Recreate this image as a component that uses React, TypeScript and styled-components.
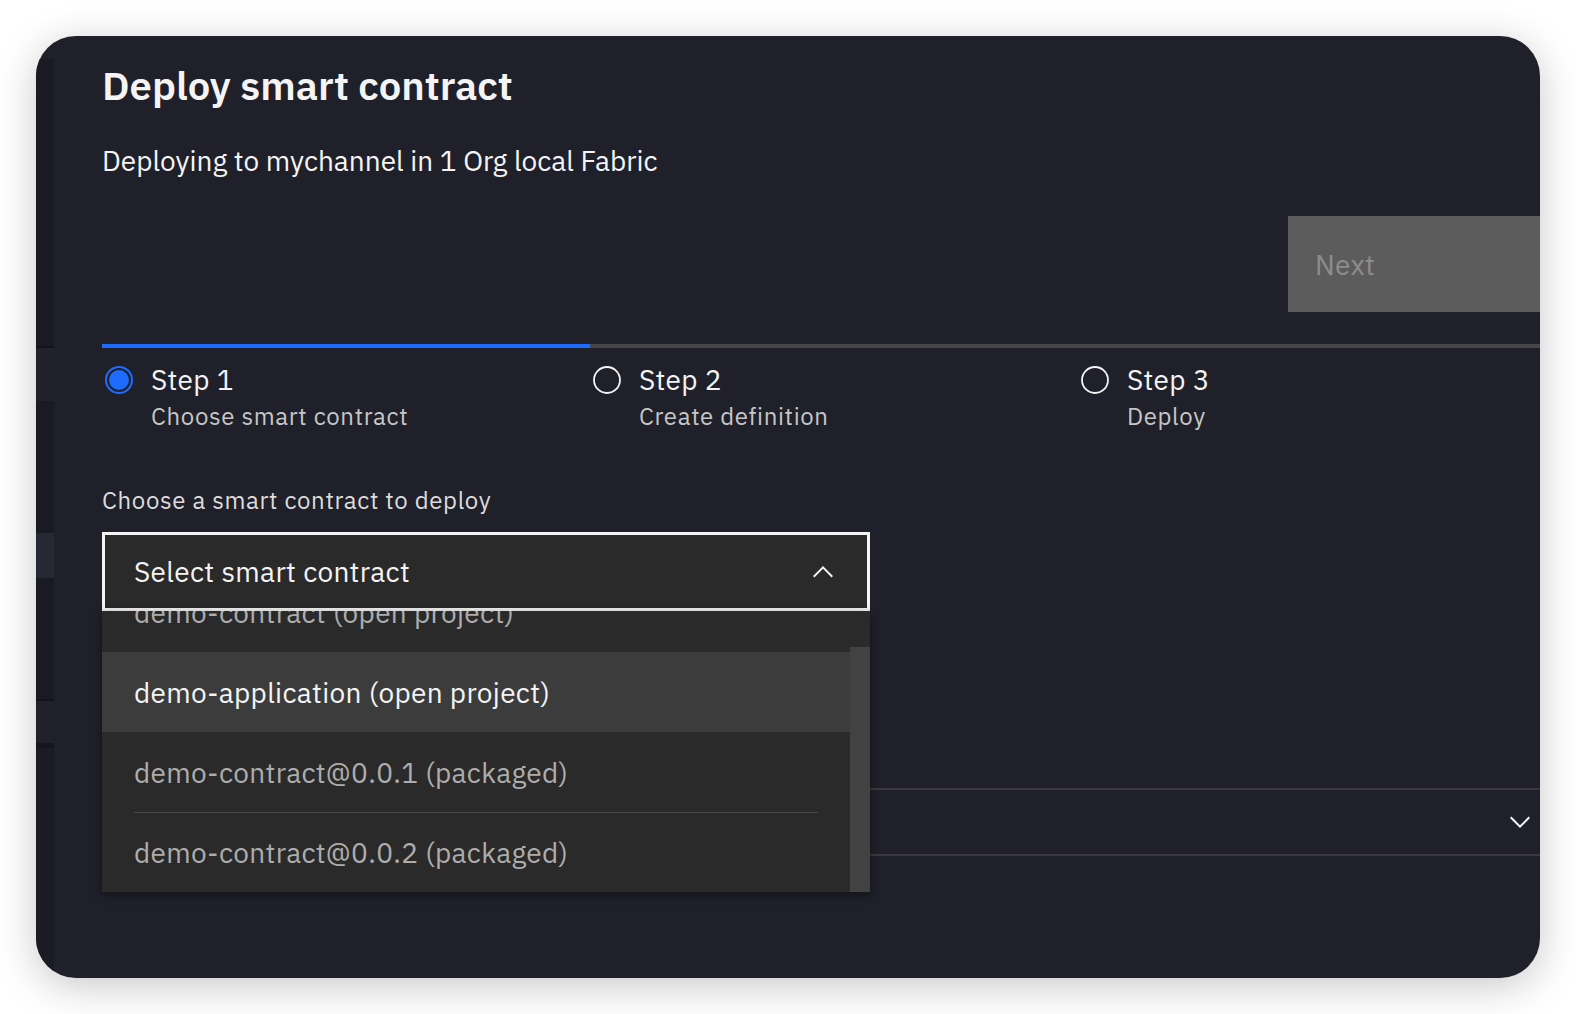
import React, { useLayoutEffect, useRef } from "react";
import styled, { createGlobalStyle } from "styled-components";

const GlobalStyle = createGlobalStyle`
  html, body {
    margin: 0;
    padding: 0;
    background: #ffffff;
  }
  * {
    box-sizing: border-box;
  }
`;

const Page = styled.div`
  width: 1576px;
  height: 1014px;
  padding: 36px;
  background: #ffffff;
  font-family: "IBM Plex Sans", Roboto, "Noto Sans", sans-serif;
`;

const Window = styled.div`
  display: flex;
  width: 1504px;
  height: 942px;
  border-radius: 40px;
  overflow: hidden;
  background: #1f2029;
  box-shadow: 0 8px 40px rgba(0, 0, 0, 0.22);
`;

const Sidebar = styled.div`
  display: flex;
  flex-direction: column;
  flex: 0 0 18px;
  padding-top: 23px;
`;

const SideBlock = styled.div<{ $h?: number; $bg: string; $line?: string }>`
  flex: ${(p) => (p.$h ? `0 0 ${p.$h}px` : "1 1 auto")};
  background: ${(p) => p.$bg};
  border-bottom: ${(p) => (p.$line ? `2px solid ${p.$line}` : "none")};
`;

const Main = styled.div`
  flex: 1 1 auto;
  min-width: 0;
  padding: 25px 0 0 48px;
  color: #f4f4f4;
`;

const Content = styled.div`
  display: flex;
  flex-direction: column;
  width: 1464px;
`;

const Title = styled.h1`
  margin: 0;
  font-size: 40px;
  line-height: 48px;
  font-weight: 600;
  color: #f4f4f4;
`;

const Subtitle = styled.p`
  margin: 34px 0 0;
  font-size: 28px;
  line-height: 36px;
  font-weight: 400;
  color: #f4f4f4;
`;

const Actions = styled.div`
  display: flex;
  justify-content: flex-end;
  margin-top: 37px;
`;

const NextButton = styled.button`
  width: 278px;
  height: 96px;
  padding: 0 27px;
  border: none;
  background: #5c5c5c;
  color: #8d8d8d;
  font-family: inherit;
  font-size: 28px;
  letter-spacing: 0.32px;
  text-align: left;
`;

const Steps = styled.div`
  display: grid;
  grid-template-columns: repeat(3, 488px);
  margin-top: 32px;
`;

const Step = styled.div<{ $current?: boolean }>`
  display: grid;
  grid-template-columns: 28px 1fr;
  column-gap: 18px;
  padding: 14px 0 0 3px;
  border-top: 4px solid ${(p) => (p.$current ? "#1d6cff" : "#474747")};
`;

const StepIcon = styled.svg`
  margin-top: 4px;
`;

const StepText = styled.div`
  display: flex;
  flex-direction: column;
`;

const StepLabel = styled.span`
  font-size: 28px;
  line-height: 36px;
  letter-spacing: 0.32px;
  color: #f4f4f4;
`;

const StepHint = styled.span`
  margin-top: 2px;
  font-size: 24px;
  line-height: 32px;
  letter-spacing: 0.64px;
  color: #c6c6c6;
`;

const FieldLabel = styled.label`
  margin-top: 52px;
  font-size: 24px;
  line-height: 32px;
  letter-spacing: 0.64px;
  color: #dcdcdc;
`;

const SelectWrap = styled.div`
  position: relative;
  width: 768px;
  margin-top: 16px;
  z-index: 2;
`;

const SelectBox = styled.div`
  display: flex;
  align-items: center;
  justify-content: space-between;
  height: 79px;
  padding: 0 28px 0 29px;
  border: 3px solid #f4f4f4;
  background: #2a2a2a;
  font-size: 28px;
  letter-spacing: 0.32px;
  color: #f4f4f4;
`;

const Menu = styled.div`
  position: absolute;
  top: 100%;
  left: 0;
  display: flex;
  width: 100%;
  height: 281px;
  background: #2a2a2a;
  box-shadow: 0 3px 10px rgba(0, 0, 0, 0.45);
`;

const OptionList = styled.div`
  flex: 1 1 auto;
  overflow: hidden;
`;

const ScrollTrack = styled.div`
  flex: 0 0 20px;
  display: flex;
  flex-direction: column;
  padding-top: 36px;
`;

const ScrollThumb = styled.div`
  flex: 1 1 auto;
  background: #424242;
`;

const Option = styled.div<{ $active?: boolean }>`
  height: 80px;
  padding: 0 32px;
  background: ${(p) => (p.$active ? "#3c3c3c" : "transparent")};
`;

const OptionLabel = styled.div<{ $active?: boolean; $divider?: boolean }>`
  display: flex;
  align-items: center;
  height: 100%;
  border-top: 1px solid ${(p) => (p.$divider ? "#4a4a4a" : "transparent")};
  font-size: 28px;
  letter-spacing: 0.32px;
  color: ${(p) => (p.$active ? "#f4f4f4" : "#adadad")};
  white-space: nowrap;
`;

const Accordion = styled.div`
  display: flex;
  align-items: center;
  justify-content: flex-end;
  height: 68px;
  margin-top: 177px;
  padding-right: 30px;
  border-top: 2px solid #3a3a3e;
  border-bottom: 2px solid #3a3a3e;
`;

const Chevron = ({ up }: { up?: boolean }) => (
  <svg width="32" height="32" viewBox="0 0 16 16" fill="#f4f4f4">
    {up ? (
      <path d="M8 5L13 10 12.3 10.7 8 6.4 3.7 10.7 3 10z" />
    ) : (
      <path d="M8 11L3 6 3.7 5.3 8 9.6 12.3 5.3 13 6z" />
    )}
  </svg>
);

const steps = [
  { label: "Step 1", hint: "Choose smart contract", current: true },
  { label: "Step 2", hint: "Create definition" },
  { label: "Step 3", hint: "Deploy" },
];

const options = [
  "demo-contract (open project)",
  "demo-application (open project)",
  "demo-contract@0.0.1 (packaged)",
  "demo-contract@0.0.2 (packaged)",
];

const App = () => {
  const listRef = useRef<HTMLDivElement>(null);

  // the list is scrolled to its end, as in the open dropdown
  useLayoutEffect(() => {
    if (listRef.current) listRef.current.scrollTop = 1000;
  }, []);

  return (
    <Page>
      <GlobalStyle />
      <Window>
        <Sidebar>
          <SideBlock $h={289} $bg="#1a1b22" $line="#131419" />
          <SideBlock $h={53} $bg="#20212a" />
          <SideBlock $h={132} $bg="#1a1b22" />
          <SideBlock $h={45} $bg="#262834" />
          <SideBlock $h={123} $bg="#1a1b22" $line="#131419" />
          <SideBlock $h={42} $bg="#20212a" />
          <SideBlock $h={5} $bg="#15161b" />
          <SideBlock $bg="#1b1c23" />
        </Sidebar>
        <Main>
          <Content>
            <Title>Deploy smart contract</Title>
            <Subtitle>Deploying to mychannel in 1 Org local Fabric</Subtitle>
            <Actions>
              <NextButton disabled>Next</NextButton>
            </Actions>
            <Steps>
              {steps.map((s) => (
                <Step key={s.label} $current={s.current}>
                  <StepIcon width="28" height="28" viewBox="0 0 28 28">
                    {s.current ? (
                      <>
                        <circle cx="14" cy="14" r="13" fill="none" stroke="#1d6cff" strokeWidth="2" />
                        <circle cx="14" cy="14" r="10" fill="#1d6cff" />
                      </>
                    ) : (
                      <circle cx="14" cy="14" r="13" fill="none" stroke="#f4f4f4" strokeWidth="1.8" />
                    )}
                  </StepIcon>
                  <StepText>
                    <StepLabel>{s.label}</StepLabel>
                    <StepHint>{s.hint}</StepHint>
                  </StepText>
                </Step>
              ))}
            </Steps>
            <FieldLabel>Choose a smart contract to deploy</FieldLabel>
            <SelectWrap>
              <SelectBox>
                <span>Select smart contract</span>
                <Chevron up />
              </SelectBox>
              <Menu>
                <OptionList ref={listRef}>
                  {options.map((o, i) => (
                    <Option key={o} $active={i === 1}>
                      <OptionLabel $active={i === 1} $divider={i === 3}>
                        {o}
                      </OptionLabel>
                    </Option>
                  ))}
                </OptionList>
                <ScrollTrack>
                  <ScrollThumb />
                </ScrollTrack>
              </Menu>
            </SelectWrap>
            <Accordion>
              <Chevron />
            </Accordion>
          </Content>
        </Main>
      </Window>
    </Page>
  );
};

export default App;
